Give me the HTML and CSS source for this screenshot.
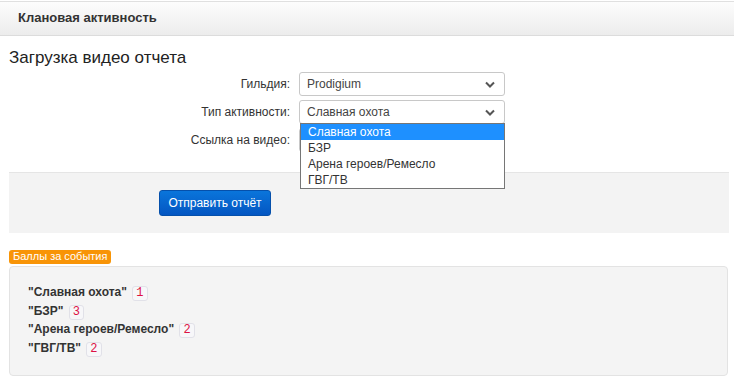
FILE: index.html
```html
<!DOCTYPE html>
<html lang="ru">
<head>
    <meta charset="UTF-8">
    <title>Клановая активность</title>
    <link rel="stylesheet" href="styles.css">
</head>
<body>
    <div class="page-head">
        <h2>Клановая активность</h2>
    </div>
    <div class="content">
        <h1 class="section-title">Загрузка видео отчета</h1>
        <form class="report-form">
            <div class="form-row">
                <label class="form-label">Гильдия:</label>
                <div class="control">
                    <div class="select">
                        <span>Prodigium</span>
                        <svg class="chevron" width="10" height="7" viewBox="0 0 10 7"><path d="M1 1.5 L5 5.5 L9 1.5" fill="none" stroke="#555" stroke-width="2"/></svg>
                    </div>
                </div>
            </div>
            <div class="form-row">
                <label class="form-label">Тип активности:</label>
                <div class="control">
                    <div class="select">
                        <span>Славная охота</span>
                        <svg class="chevron" width="10" height="7" viewBox="0 0 10 7"><path d="M1 1.5 L5 5.5 L9 1.5" fill="none" stroke="#555" stroke-width="2"/></svg>
                    </div>
                    <ul class="dropdown">
                        <li class="active">Славная охота</li>
                        <li>БЗР</li>
                        <li>Арена героев/Ремесло</li>
                        <li>ГВГ/ТВ</li>
                    </ul>
                </div>
            </div>
            <div class="form-row">
                <label class="form-label">Ссылка на видео:</label>
                <div class="control">
                    <input type="text" class="text-input">
                </div>
            </div>
            <div class="form-actions">
                <button type="submit" class="btn-primary">Отправить отчёт</button>
            </div>
        </form>

        <span class="label-warning">Баллы за события</span>
        <div class="well">
            <div class="score-line"><b>"Славная охота"</b> <code>1</code></div>
            <div class="score-line"><b>"БЗР"</b> <code>3</code></div>
            <div class="score-line"><b>"Арена героев/Ремесло"</b> <code>2</code></div>
            <div class="score-line"><b>"ГВГ/ТВ"</b> <code>2</code></div>
        </div>
    </div>
</body>
</html>
```

FILE: styles.css
```css
body {
    margin: 0;
    font-family: "Liberation Sans", Arial, sans-serif;
    font-size: 12px;
    color: #333;
    background: #fff;
}
.page-head {
    margin-top: 1px;
    height: 33px;
    border-top: 1px solid #e0e0e0;
    border-bottom: 1px solid #dcdcdc;
    background: linear-gradient(to bottom, #fdfdfd, #ececec);
    padding-left: 18px;
}
.page-head h2 {
    margin: 0;
    font-size: 13px;
    line-height: 31px;
    font-weight: bold;
    color: #333;
}
.content {
    padding: 0 5px 0 9px;
}
.section-title {
    margin: 12px 0 4px;
    font-size: 17px;
    line-height: 20px;
    font-weight: normal;
    color: #222;
}
.form-row {
    display: flex;
    align-items: center;
    margin-bottom: 4px;
}
.form-label {
    width: 281px;
    padding-right: 9px;
    text-align: right;
    font-size: 12px;
    color: #333;
}
.control {
    position: relative;
    width: 206px;
}
.select {
    display: flex;
    align-items: center;
    justify-content: space-between;
    height: 22px;
    border: 1px solid #c8c8c8;
    border-radius: 3px;
    padding: 0 9px 0 7px;
    color: #444;
    background: #fff;
}
.text-input {
    box-sizing: border-box;
    width: 206px;
    height: 24px;
    border: 1px solid #c8c8c8;
    border-radius: 3px;
    margin: 0;
}
.dropdown {
    position: absolute;
    top: 23px;
    left: 1px;
    right: 0;
    margin: 0;
    padding: 0;
    list-style: none;
    background: #fff;
    border: 1px solid #767676;
    z-index: 5;
}
.dropdown li {
    height: 16px;
    line-height: 16px;
    padding-left: 7px;
    color: #333;
}
.dropdown li.active {
    background: #1e90ff;
    color: #fff;
}
.form-actions {
    margin-top: 20px;
    padding: 17px 0 17px 150px;
    background: #f3f3f3;
    border-top: 1px solid #e5e5e5;
}
.btn-primary {
    width: 112px;
    height: 26px;
    border: 1px solid #0550ab;
    border-radius: 3px;
    background: linear-gradient(to bottom, #0a75db, #0456c2);
    color: #fff;
    font-family: "Liberation Sans", Arial, sans-serif;
    font-size: 12px;
    padding: 0;
}
.label-warning {
    display: inline-block;
    margin-top: 17px;
    padding: 1px 4px 2px;
    background: #f89406;
    color: #fff;
    font-size: 11px;
    line-height: 11px;
    border-radius: 3px;
}
.well {
    margin-top: 2px;
    margin-right: 1px;
    padding: 16px 18px 18px;
    min-height: 70px;
    background: #f4f4f4;
    border: 1px solid #e3e3e3;
    border-radius: 4px;
}
.score-line {
    height: 18.5px;
    line-height: 18px;
}
.score-line b {
    font-size: 12px;
}
code {
    display: inline-block;
    font-family: "Liberation Mono", monospace;
    font-size: 12px;
    line-height: 11px;
    padding: 1px 3px;
    color: #dd1144;
    background: #f7f7f9;
    border: 1px solid #e1e1e8;
    border-radius: 3px;
    margin-left: 2px;
}
```
